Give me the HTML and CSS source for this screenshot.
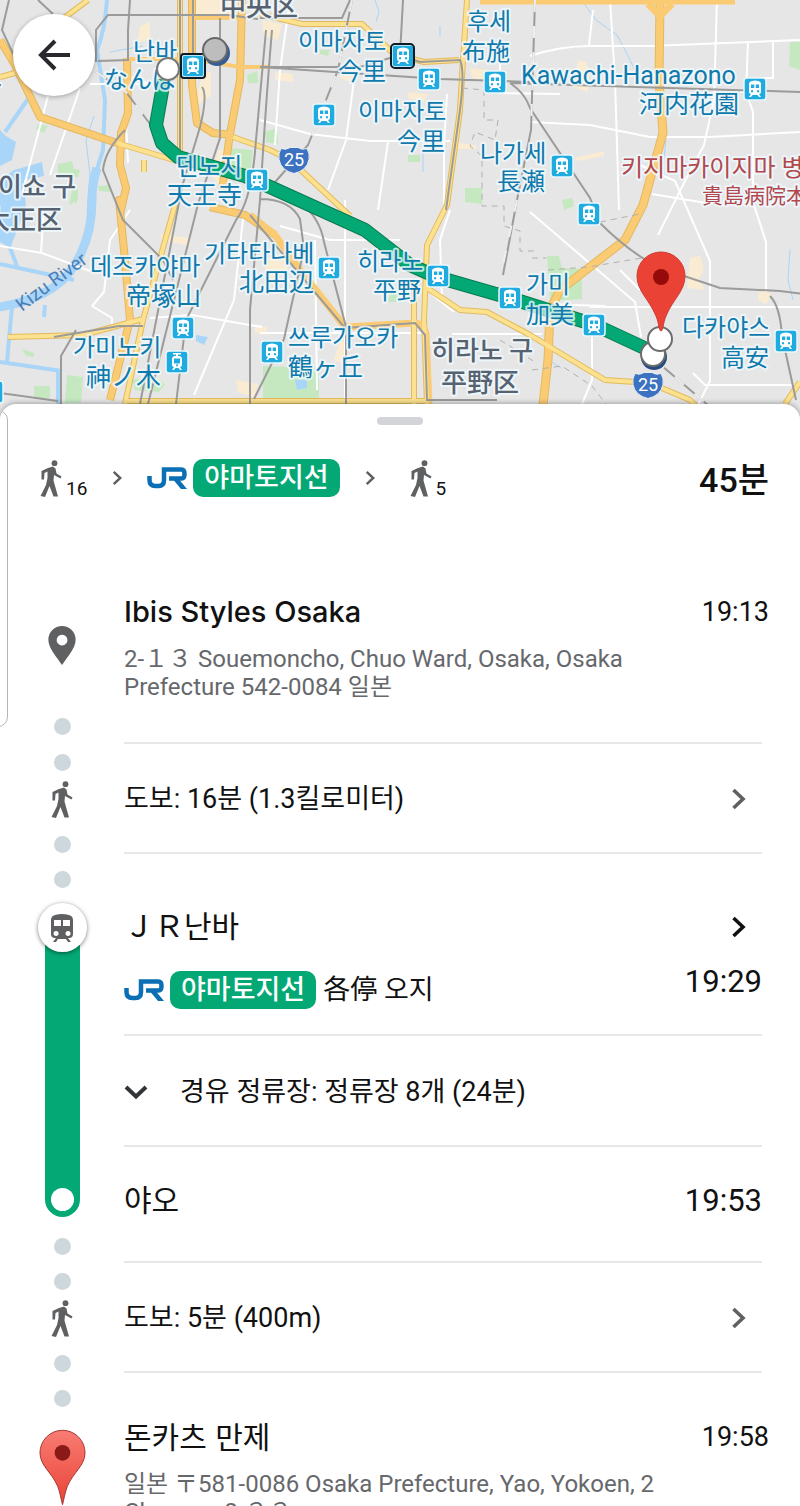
FILE: index.html
```
<!DOCTYPE html>
<html lang="ko">
<head>
    <meta charset="UTF-8">
    <meta name="viewport" content="width=device-width, initial-scale=1.0">
    <title>Ibis Styles Osaka - 돈카츠 만제</title>
    <link rel="stylesheet" href="styles.css">
</head>
<body>
    <!-- shared icons -->
    <svg class="icon-defs" width="0" height="0" aria-hidden="true">
        <symbol id="walk" viewBox="0 0 22 37">
            <circle cx="14.500" cy="3.200" r="2.900"/>
            <path d="M8 8l5-1.500 2.500 2 1 5 5 3-1 2-6.500-3.500-.5 5.500 4.500 16h-4.500l-4-10.500L5 37l-4.500-1L6 25l1.500-7V11.500L4.500 13 4 19.500H1.500V11z"/>
        </symbol>
        <symbol id="jr" viewBox="0 0 40 22">
            <path d="M2.500 9v4q0 6 6 6h3q5.500 0 5.500-6V2.500h17.500q3 0 3 4.500t-3 4.500H22" fill="none" stroke="#0a6fb5" stroke-width="4.500"/>
            <path d="M24 10h6l10 12h-6z" fill="#0a6fb5"/>
        </symbol>
        <symbol id="train" viewBox="0 0 24 28">
            <path fill-rule="evenodd" d="M5 1q7-2 14 0 4 1 4 5v14q0 4-4 4h-1l3 4h-3l-2-3H8l-2 3H3l3-4H5q-4 0-4-4V6q0-4 4-5zM4 6v6h7V6zm9 0v6h7V6zM6 17a2.500 2.500 0 1 0 .1 0zm12 0a2.500 2.500 0 1 0 .1 0z"/>
        </symbol>
        <symbol id="arrow" viewBox="0 0 16 22">
            <path d="M2.500 2L12 11l-9.500 9" fill="none" stroke="currentColor" stroke-width="3.600"/>
        </symbol>
        <symbol id="station" viewBox="0 0 24 24">
            <rect x="1" y="1" width="22" height="22" rx="3" fill="#1fabdf" stroke="#e9f8fd" stroke-width="1.500"/>
            <path fill="#fff" fill-rule="evenodd" d="M9 4q3-1 6 0 3 .5 3 3v8q0 2-2 2l2 3h-2l-1.500-2h-5L8 20H6l2-3q-2 0-2-2V7q0-2.500 3-3zM8 7.500v3.500h3.300V7.500zm4.700 0v3.500H16V7.500zM9 13a1.200 1.200 0 1 0 .1 0zm6 0a1.200 1.200 0 1 0 .1 0z"/>
        </symbol>
        <symbol id="tram" viewBox="0 0 24 24">
            <rect x="1" y="1" width="22" height="22" rx="3" fill="#1fabdf" stroke="#e9f8fd" stroke-width="1.500"/>
            <path fill="#fff" fill-rule="evenodd" d="M8 3h8v1.500h-3V6h2q2 1 2 3v6q0 2-2 2l2 3h-2l-1.500-2h-3L9 20H7l2-3q-2 0-2-2V9q0-2 2-3h2V4.500H8zM9 8.500v5h6v-5zm3 5.800a1 1 0 1 0 .1 0z"/>
        </symbol>
        <symbol id="shield" viewBox="0 0 32 28">
            <path d="M3 2q5 2 9-1h8q4 3 9 1 3 5 2 11-2 11-15 14Q3 24 1 13 0 7 3 2z" fill="#3c72c0" stroke="#e8eef7"/>
        </symbol>
    </svg>

    <div class="map">
        <svg class="map-canvas" viewBox="0 0 800 416" preserveAspectRatio="xMidYMin slice" role="img" aria-label="경로 지도">
            <rect width="800" height="416" fill="#e6e6e6"/>

            <!-- parks and built-up blocks -->
            <g fill="#c5e8c0">
                <path d="M58 164l14-3 2 8 6 1-2 7-20-1zM38 124l10 2-4 7-8-4zM98 186l13-1v7l-12-1zM72 190l6-2v12l-9 5zM67 375l16 2-2 26H65zM34 386h16v12H34zM22 349l12 4v4l-8-1zM132 380l20-4 13 8-6 8-24-2zM263 366l56 2v36h-56zM265 132l12-4 1 16-12-2zM247 75l10-4 1 12-10 0zM408 155l12 0v7h-12zM465 188h17v16l-17-2zM320 50l10 0-2 6-8-2zM790 42h10v28l-11-4zM547 256l12 0 3 12 20 1v30l-32 2zM562 200l10-2 2 8-10 4zM231 148l22 2-2 20-20-2zM390 292l8 0v10l-10 0zM70 196l7 0v8z"/>
            </g>
            <g fill="#f9ecd2">
                <path d="M196 0h50v14l-50 6zM140 26l10-4v18l-12 2zM203 72h8v24l-18 12zM262 20l20 4-4 16-14-4zM275 72l18 2v8l-18-2zM340 68l12 4-2 10-10-4zM408 92l20 2-4 8-16-4zM470 68l20 2-4 10-14-2zM578 60l8 2 4 10-2 20-14-4zM690 258l10-2 4 14-5 8 6 12-18-2zM574 158l30-7v5l-26 5zM230 150h-12l-6 26 8 10 12-8zM160 234l30 4v8l-28-6zM262 260l24-8 2 20-18 8zM236 380l22 4-4 14-16-6zM340 340l10 4-6 20-10-4zM450 142l26 3v4l-24 0zM760 290l12 4-6 10-8-4zM255 325l12 2v8l-12-2z"/>
            </g>

            <!-- rivers -->
            <g fill="none" stroke="#a9d5f8">
                <path stroke-width="4" d="M107 0q-2 30-10 50l8 50-2 50q-10 30-11 50"/>
                <path stroke-width="9" d="M97 168q-5 15-5 32 0 40-20 69-20 30-78 39"/>
                <path stroke-width="4" d="M30 96L5 132M0 264l74 16M0 362l62 9M12 306L7 362M7 240l10 26M45 305l-1 12"/>
                <path stroke-width="6" d="M59 371v33"/>
                <path stroke-width="1" d="M94 116l-8 24 4 35-3 38M110 52l33-6M583 2l13 18 21 15 8 15 11 22M375 0l4 12-3 10M440 26v10M423 148v24M666 140l-2 18M790 250l-2 30 5 20M549 360l12 8"/>
            </g>
            <path d="M0 130l6 6 10 6-4 18-12 6zM14 170l28-8 2 14-20 4 2 28-16 40-10-6v-62zM196 335l12 2-4 8-8-4zM295 380l12 0v8l-10 2z" fill="#a9d5f8"/>

            <!-- local streets -->
            <g fill="none" stroke="#fff" stroke-width="2">
                <path d="M48 96L22 194M80 88L50 175M44 207l-3 46M0 246l42 7 48 18M130 210l-20 30-6 52-12 14M92 306l20 12 0 10M150 318l42-3 70 12M290 0l-10 70-5 75M260 120l50 14 60 7h80M354 80l-8 60-18 50M388 142l-10 68M500 53v40l60 1M447 94l-3 50v60M345 200v204M280 226l50 14h70M450 210l-10 30 2 60M315 240l2 150M260 333h165M90 84h60l-40-14M128 163l-2-40M244 210l-10 90-40 95"/>
                <path d="M530 56q30-10 60-10h60l150-6M593 10l-4 35M610 0l5 80 4 130M530 122l60 3 60 12h60l90-5M717 0l-3 100-10 45-16 30-30 60M748 42l-2 50 7 20v90l13 40 0 50M773 42v36h-15M530 212l70 60 35 30 6 35M592 320v60l-10 24M640 165l35 16 35 80v120l-12 24M590 307h210M545 304l60 2M693 373l12 12h90M652 194l60 10M620 270l20 20M452 334h90M424 288l30 24M740 92h20"/>
            </g>

            <!-- highways -->
            <g fill="none" stroke="#e3b95f" stroke-linejoin="round">
                <path stroke-width="8" d="M0 40l15 25 25 52 77 26M127 58l1 55-7 20-1 32 6 23-5 22-2-10 6 60 5 60-15 60-5 20M242 0l-2 80-10 54-8 56M192 0v85l5 38 16 10 20 2M210 207l35 8 30 20"/>
                <path stroke-width="9" d="M660 0l-1 80 4 53-20 72-18 35-65 50-10 20-2 50-5 45"/>
                <path stroke-width="6" d="M180 0v162M467 0l-4 60-3 50-13 95-20 40-3 75 3 84M414 280v124M117 143l60 18M144 160v12M60 21L88 0M175 205l-32 115-18 84M0 77l15-4M233 137l37 13 20 10 60 56M8 337l75-2 60-16M125 401h300M427 288l33 22 27 2 43 23 75 45 45 3 40 17 10 10M800 382l-15 22M260 14l42 10 60 0 32 30 30 8 35-2"/>
            </g>
            <g fill="none" stroke="#fbcb74" stroke-linejoin="round">
                <path stroke-width="6" d="M0 40l15 25 25 52 77 26M127 58l1 55-7 20-1 32 6 23-5 22-2-10 6 60 5 60-15 60-5 20M242 0l-2 80-10 54-8 56M192 0v85l5 38 16 10 20 2M210 207l35 8 30 20"/>
                <path stroke-width="7" d="M660 0l-1 80 4 53-20 72-18 35-65 50-10 20-2 50-5 45"/>
                <path stroke-width="7" d="M250 215l25 20 25 35 45 57 70-4q10 2 11 12l3 70M480 1h255M648 4l12 12 12-12"/>
                <path stroke-width="4" d="M130 59h60l50 8h30M193 18h50"/>
            </g>
            <g fill="none" stroke="#fce28f" stroke-width="4" stroke-linejoin="round">
                <path d="M180 0v162M467 0l-4 60-3 50-13 95-20 40-3 75 3 84M414 280v124M117 143l60 18M144 160v12M60 21L88 0M175 205l-32 115-18 84M0 77l15-4M233 137l37 13 20 10 60 56M8 337l75-2 60-16M125 401h300M427 288l33 22 27 2 43 23 75 45 45 3 40 17 10 10M800 382l-15 22M260 14l42 10 60 0 32 30 30 8 35-2"/>
            </g>

            <!-- railways -->
            <g fill="none" stroke="#9b9b9a" stroke-width="2">
                <path d="M9 0L2 30l15 32M38 0l15 14M96 62V30l12-15h120l30 4M130 0l-2 30v30l-30 1M96 72l30 20 24 32M180 0v160M193 0v60M220 18v120l-22 66-50 200M202 87q6 8-2 40l-18 60-42 217M266 30l-10 110q-4 60-20 80l-50 100-10 84M125 130q-20 20-22 40l20 50 40 40 10 20"/>
                <path d="M260 18h82l8-18M352 0l-14 70-30 75-40 45M403 0l-3 55-40 12-100 0 180 12 90 3M272 30q-6 70-12 170l-10 110 0 94M400 55l20 7 40-2q5 10 0 50l-14 100M535 0l-4 130-14 70-14 75M510 83q15 10 20 25l60 90 10 25q30 30 60 45l60 20 60 3 40 5 30-1M770 296q10 10 12 40l14 64M510 83l290 9M260 199q30 0 40 20l4 30-20 90-30 60M300 202q20 16 24 40l22 85v77M250 215l95 113 70-5 10 12 2 65h70M54 337l65-11h24M61 404V356l15-26M0 393l58 8M655 360l54 46"/>
            </g>
            <g fill="none" stroke="#efefef" stroke-width="2" stroke-dasharray="12 14">
                <path d="M352 0l-14 70-30 75M535 0l-4 130M517 200l-14 65M655 360l54 46M96 72l30 20 24 32"/>
            </g>
            <path d="M462 88l22 2v30l14 0-3 20-20-8-5 14 12 10v50h22v20l16 5v20h15M532 258h14M548 270l40-3 60-10M532 370l30-4 30 20 14 18M500 340l35 22M600 222l40-8" fill="none" stroke="#b0b0b2" stroke-dasharray="6 5"/>

            <!-- transit route -->
            <path class="route-edge" d="M164 80l-8 45 6 18 16 14 67 19 25 11 95 43 45 35 27 12 73 21 85 27 58 27"/>
            <path class="route-line" d="M164 80l-8 45 6 18 16 14 67 19 25 11 95 43 45 35 27 12 73 21 85 27 58 27"/>

            <g class="label">
                <text x="133" y="60">난바</text>
                <text x="104" y="88">なんば</text>
                <text x="298" y="50">이마자토</text>
                <text x="338" y="80">今里</text>
                <text x="358" y="120">이마자토</text>
                <text x="397" y="150">今里</text>
                <text x="467" y="30">후세</text>
                <text x="462" y="60">布施</text>
                <text class="latin" x="521" y="84">Kawachi-Hanazono</text>
                <text class="latin" x="639" y="113">河内花園</text>
                <text x="480" y="162">나가세</text>
                <text x="497" y="190">長瀬</text>
                <text x="176" y="175">덴노지</text>
                <text class="latin" x="167" y="204">天王寺</text>
                <text x="90" y="275">데즈카야마</text>
                <text class="latin" x="126" y="305">帝塚山</text>
                <text x="204" y="262">기타타나베</text>
                <text class="latin" x="239" y="291">北田辺</text>
                <text x="357" y="270">히라노</text>
                <text x="373" y="299">平野</text>
                <text x="526" y="293">가미</text>
                <text x="526" y="323">加美</text>
                <text x="73" y="356">가미노키</text>
                <text class="latin" x="86" y="386">神ノ木</text>
                <text x="288" y="346">쓰루가오카</text>
                <text class="latin" x="288" y="376">鶴ヶ丘</text>
                <text x="682" y="336">다카야스</text>
                <text x="721" y="366">高安</text>
            </g>
            <g class="label district">
                <text x="220" y="16">中央区</text>
                <text x="-22" y="94">구</text>
                <text x="-2" y="196">이쇼 구</text>
                <text x="-16" y="229">大正区</text>
                <text x="431" y="360">히라노 구</text>
                <text x="441" y="392">平野区</text>
            </g>
            <g class="label hospital">
                <text x="621" y="176">키지마카이지마 병원</text>
                <text class="small" x="702" y="203">貴島病院本院</text>
            </g>
            <text class="label river" transform="translate(22 312) rotate(-37)">Kizu River</text>

            <!-- stations -->
            <use href="#station" x="181" y="54" width="24" height="24"/>
            <rect x="181" y="54" width="24" height="24" rx="3" fill="none" stroke="#0b1a26" stroke-width="2"/>
            <use href="#station" x="391" y="44" width="24" height="24"/>
            <rect x="391" y="44" width="23" height="24" rx="4" fill="none" stroke="#0b1a26" stroke-width="2"/>
            <use href="#station" x="417" y="67" width="24" height="24"/>
            <use href="#station" x="483" y="70" width="24" height="24"/>
            <use href="#station" x="312" y="103" width="24" height="24"/>
            <use href="#station" x="743" y="77" width="24" height="24"/>
            <use href="#station" x="550" y="154" width="24" height="24"/>
            <use href="#station" x="577" y="202" width="24" height="24"/>
            <use href="#station" x="245" y="168" width="24" height="24"/>
            <use href="#station" x="317" y="256" width="24" height="24"/>
            <use href="#station" x="426" y="264" width="24" height="24"/>
            <use href="#station" x="498" y="286" width="24" height="24"/>
            <use href="#station" x="582" y="313" width="24" height="24"/>
            <use href="#station" x="171" y="316" width="24" height="24"/>
            <use href="#tram" x="165" y="350" width="24" height="24"/>
            <use href="#station" x="260" y="340" width="24" height="24"/>
            <use href="#station" x="774" y="329" width="24" height="24"/>
            <use href="#station" x="-20" y="380" width="24" height="24"/>

            <use href="#shield" x="278" y="146" width="32" height="29"/>
            <text class="shield-text" x="294" y="166">25</text>
            <use href="#shield" x="632" y="371" width="32" height="29"/>
            <text class="shield-text" x="648" y="391">25</text>

            <circle cx="217" cy="53" r="13" fill="#355d94"/>
            <circle cx="215" cy="50" r="12" fill="#bdbdbd" stroke="#67686b" stroke-width="2"/>
            <circle cx="168" cy="69" r="11" fill="#fff" stroke="#77787a" stroke-width="2"/>
            <circle cx="654" cy="357" r="13" fill="#274b80"/>
            <circle cx="653" cy="354" r="12" fill="#fff" stroke="#6b6c6e" stroke-width="2"/>
            <circle cx="660" cy="339" r="12" fill="#fff" stroke="#6b6c6e" stroke-width="2"/>
            <path d="M661 331c-2 0-2-8-5-15-7-17-19-25-19-40a24 24 0 0 1 48 0c0 15-12 23-19 40-3 7-3 15-5 15z" fill="#ea4335" stroke="#cf3b30"/>
            <circle cx="661" cy="277" r="8" fill="#960a0a"/>
        </svg>
        <button class="back" type="button" aria-label="뒤로">
            <svg width="34" height="32" viewBox="0 0 34 32" fill="none" stroke="#27292c" stroke-width="4">
                <path d="M18 2L4 16l14 14M4 16h29"/>
            </svg>
        </button>
    </div>

    <main class="sheet">
        <div class="edge-panel"></div>
        <div class="grabber"></div>

        <header class="summary">
            <svg class="walk-icon"><use href="#walk"/></svg>
            <span class="walk-min">16</span>
            <svg class="next"><use href="#arrow"/></svg>
            <svg class="jr-logo" role="img" aria-label="JR"><use href="#jr"/></svg>
            <span class="line-badge">야마토지선</span>
            <svg class="next"><use href="#arrow"/></svg>
            <svg class="walk-icon last"><use href="#walk"/></svg>
            <span class="walk-min">5</span>
            <strong class="total">45분</strong>
        </header>

        <ol class="steps">
            <li class="step place origin">
                <div class="rail">
                    <svg class="origin-pin" viewBox="0 0 28 40">
                        <path fill="#5f6062" fill-rule="evenodd" d="M14 0a14 14 0 0 1 14 14c0 9-9 18-14 26C9 32 0 23 0 14A14 14 0 0 1 14 0zm0 9a5.500 5.500 0 1 0 .1 0z"/>
                    </svg>
                    <i class="dot"></i>
                </div>
                <div class="step-body">
                    <div class="line">
                        <h2>Ibis Styles Osaka</h2>
                        <time>19:13</time>
                    </div>
                    <p class="address">2-１３ Souemoncho, Chuo Ward, Osaka, Osaka Prefecture 542-0084 일본</p>
                </div>
            </li>
            <li class="step walk">
                <div class="rail">
                    <i class="dot"></i>
                    <svg class="walk-icon"><use href="#walk"/></svg>
                    <i class="dot"></i>
                </div>
                <button class="step-body" type="button">
                    <span>도보: 16분 (1.3킬로미터)</span>
                    <svg class="more"><use href="#arrow"/></svg>
                </button>
            </li>
            <li class="step board">
                <div class="rail">
                    <i class="dot"></i>
                    <span class="train-stop"><svg width="24" height="28"><use href="#train"/></svg></span>
                    <i class="track"></i>
                </div>
                <div class="step-body">
                    <a class="line" href="#">
                        <span class="stop-name">ＪＲ난바</span>
                        <svg class="more"><use href="#arrow"/></svg>
                    </a>
                    <div class="line service">
                        <svg class="jr-logo" role="img" aria-label="JR"><use href="#jr"/></svg>
                        <span class="line-badge">야마토지선</span>
                        <span class="headsign">各停 오지</span>
                        <time>19:29</time>
                    </div>
                </div>
            </li>
            <li class="step stops">
                <div class="rail"><i class="track"></i></div>
                <button class="step-body" type="button" aria-expanded="false">
                    <svg class="expand" viewBox="0 0 24 16"><path d="M2 3l10 9.500L22 3" fill="none" stroke="#333538" stroke-width="4"/></svg>
                    <span>경유 정류장: 정류장 8개 (24분)</span>
                </button>
            </li>
            <li class="step alight">
                <div class="rail">
                    <i class="track end"></i>
                    <i class="dot"></i>
                </div>
                <div class="step-body line">
                    <span class="stop-name">야오</span>
                    <time>19:53</time>
                </div>
            </li>
            <li class="step walk">
                <div class="rail">
                    <i class="dot"></i>
                    <svg class="walk-icon"><use href="#walk"/></svg>
                    <i class="dot"></i>
                </div>
                <button class="step-body" type="button">
                    <span>도보: 5분 (400m)</span>
                    <svg class="more"><use href="#arrow"/></svg>
                </button>
            </li>
            <li class="step place destination">
                <div class="rail">
                    <i class="dot"></i>
                    <svg class="destination-pin" viewBox="0 0 48 78">
                        <defs>
                            <linearGradient id="pin-fill" x1="0" y1="0" x2="0" y2="1">
                                <stop offset="0" stop-color="#f87c73"/>
                                <stop offset="1" stop-color="#ea4335"/>
                            </linearGradient>
                        </defs>
                        <path d="M24 77c-1-3-2-11-5-19C13 44 1 37 1 24a23 23 0 0 1 46 0c0 13-12 20-18 34-3 8-4 16-5 19z" fill="url(#pin-fill)" stroke="#a03530"/>
                        <circle cx="24" cy="24" r="8" fill="#891a17"/>
                    </svg>
                </div>
                <div class="step-body">
                    <div class="line">
                        <h2 class="stop-name">돈카츠 만제</h2>
                        <time>19:58</time>
                    </div>
                    <p class="address">일본 〒581-0086 Osaka Prefecture, Yao, Yokoen, 2 Chome－8-３３</p>
                </div>
            </li>
        </ol>
    </main>
</body>
</html>
```
FILE: styles.css
```
* {
    box-sizing: border-box;
}
body {
    margin: 0;
    height: 100vh;
    display: flex;
    flex-direction: column;
    overflow: hidden;
    font-family: Roboto, "Noto Sans CJK KR", sans-serif;
    font-size: 27px;
    line-height: 34px;
    color: #111;
    background-color: #fff;
}
button {
    font: inherit;
    color: inherit;
    background: none;
    border: none;
    padding: 0;
    text-align: left;
    cursor: pointer;
}
.icon-defs {
    position: absolute;
}

/* map */
.map {
    position: relative;
    flex: none;
    height: 416px;
}
.map-canvas {
    display: block;
    width: 100%;
    height: 100%;
}
.back {
    position: absolute;
    top: 14px;
    left: 13px;
    width: 82px;
    height: 82px;
    display: flex;
    align-items: center;
    justify-content: center;
    border-radius: 50%;
    background-color: #fff;
    box-shadow: 0 1px 5px rgba(0, 0, 0, 0.3);
}
.route-edge,
.route-line {
    fill: none;
    stroke: #087a50;
    stroke-width: 14px;
    stroke-linejoin: round;
}
.route-line {
    stroke: #04a874;
    stroke-width: 12px;
}
.label {
    font-size: 24px;
    fill: #0f79ab;
    stroke: rgba(240, 250, 255, 0.8);
    stroke-width: 4px;
    stroke-linejoin: round;
    paint-order: stroke;
}
.latin {
    font-size: 25px;
}
.district {
    font-size: 26px;
    font-weight: 500;
    fill: #566270;
}
.hospital {
    fill: #b2484d;
}
.small {
    font-size: 21px;
}
.river {
    font-size: 19px;
    fill: #4a7fb8;
    stroke: none;
}
.shield-text {
    font-size: 18px;
    fill: #fff;
    text-anchor: middle;
}

/* bottom sheet */
.sheet {
    position: relative;
    flex: 1;
    min-height: 0;
    margin-top: -12px;
    padding-top: 13px;
    overflow: hidden;
    border-radius: 16px 16px 0 0;
    background-color: #fff;
    box-shadow: 0 -1px 5px rgba(0, 0, 0, 0.3);
}
.edge-panel {
    position: absolute;
    top: 6px;
    left: -12px;
    width: 20px;
    height: 317px;
    border: 1px solid #b5b5b5;
    border-radius: 10px;
}
.grabber {
    width: 46px;
    height: 8px;
    margin: 0 auto;
    border-radius: 4px;
    background-color: #d4d5d9;
}
.summary {
    display: flex;
    align-items: center;
    margin-top: 34px;
    padding: 0 31px 80px 40px;
}
.walk-icon {
    width: 22px;
    height: 37px;
    fill: #5f6062;
}
.walk-min {
    align-self: flex-end;
    margin-left: 4px;
    font-size: 19px;
    line-height: 17px;
}
.next {
    width: 11px;
    height: 16px;
    margin: 0 24px 0 25px;
    color: #5f6062;
}
.walk-icon.last {
    margin-left: 10px;
}
.jr-logo {
    width: 40px;
    height: 22px;
    margin-right: 6px;
}
.line-badge {
    padding: 0 11px;
    border-radius: 10px;
    background-color: #04a874;
    color: #fff;
    font-weight: 500;
    line-height: 38px;
}
.total {
    margin-left: auto;
    padding-top: 3px;
    font-size: 34px;
    font-weight: 500;
}

/* steps */
.steps {
    list-style: none;
    margin: 0;
    padding: 0;
}
.step {
    display: grid;
    grid-template-columns: 124px 1fr;
    padding-right: 38px;
}
.step-body {
    border-bottom: 2px solid #e6e7e8;
}
.rail {
    display: flex;
    flex-direction: column;
    align-items: center;
}
.dot {
    flex: none;
    width: 17px;
    height: 17px;
    border-radius: 50%;
    background-color: #cdd7dc;
}
.line {
    display: flex;
    align-items: center;
    color: inherit;
    text-decoration: none;
}
.line time {
    margin-left: auto;
    font-size: 31px;
}
h2 {
    margin: 0;
    font-family: Inter, Roboto, "Noto Sans CJK KR", sans-serif;
    font-size: 29px;
    font-weight: 500;
}
.stop-name {
    font-size: 30px;
    font-weight: 400;
}
.place .line time {
    margin-right: -7px;
    font-size: 27px;
}
.address {
    margin: 16px 0 0;
    max-width: 540px;
    font-size: 24px;
    line-height: 28px;
    color: #66686c;
}
.more {
    width: 16px;
    height: 22px;
    margin: 0 15px 0 auto;
}

.origin .rail {
    padding-top: 49px;
    gap: 53px;
}
.origin .step-body {
    padding: 18px 0 41px;
}
.origin-pin {
    width: 28px;
    height: 39px;
}
.walk .rail {
    padding-top: 10px;
}
.walk .walk-icon {
    margin: 10px 0 18px;
}
.walk .step-body {
    display: flex;
    align-items: center;
    min-height: 110px;
    padding-top: 2px;
}
.walk .more {
    color: #5f6062;
}

.board .rail,
.destination .rail {
    padding-top: 17px;
}
.train-stop {
    position: relative;
    flex: none;
    display: flex;
    align-items: center;
    justify-content: center;
    width: 49px;
    height: 49px;
    margin-top: 15px;
    border-radius: 50%;
    background-color: #fff;
    box-shadow: 0 1px 4px rgba(0, 0, 0, 0.5);
    fill: #5f6062;
}
.track {
    flex: 1;
    width: 35px;
    background-color: #04a874;
}
.board .track {
    margin-top: -8px;
}
.board .step-body {
    padding: 56px 0 25px;
}
.board .service {
    margin-top: 27px;
}
.headsign {
    margin-left: 7px;
}
.service time {
    align-self: flex-start;
    line-height: 22px;
}

.stops .step-body {
    display: flex;
    align-items: center;
    min-height: 111px;
    padding-top: 2px;
}
.expand {
    width: 24px;
    height: 16px;
    margin-right: 32px;
}
.alight .step-body {
    min-height: 116px;
    padding-bottom: 6px;
}
.track.end {
    display: flex;
    align-items: flex-end;
    justify-content: center;
    flex: none;
    height: 70px;
    margin-bottom: 21px;
    padding-bottom: 6px;
    border-radius: 0 0 18px 18px;
}
.track.end::after {
    content: "";
    width: 23px;
    height: 23px;
    border-radius: 50%;
    background-color: #fff;
}
.destination .step-body {
    padding-top: 47px;
    border-bottom: none;
}
.destination-pin {
    width: 47px;
    height: 77px;
    margin-top: 22px;
}
```
